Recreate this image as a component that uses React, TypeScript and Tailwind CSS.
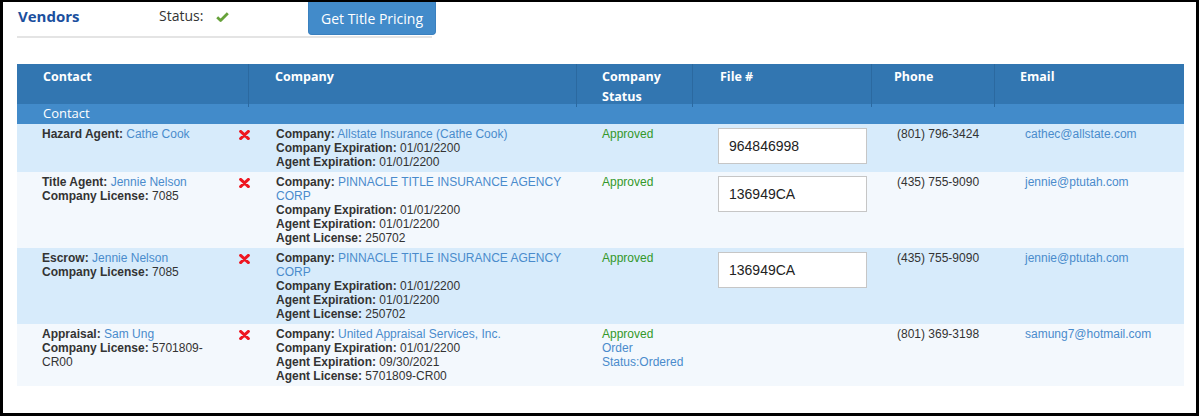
import React from 'react';

type Vendor = {
  role: string;
  name: string;
  license?: string;
  company: string;
  companyExp: string;
  agentExp: string;
  agentLicense?: string;
  status: string;
  orderStatus?: string;
  fileNo?: string;
  phone: string;
  email: string;
};

const vendors: Vendor[] = [
  {
    role: 'Hazard Agent',
    name: 'Cathe Cook',
    company: 'Allstate Insurance (Cathe Cook)',
    companyExp: '01/01/2200',
    agentExp: '01/01/2200',
    status: 'Approved',
    fileNo: '964846998',
    phone: '(801) 796-3424',
    email: 'cathec@allstate.com',
  },
  {
    role: 'Title Agent',
    name: 'Jennie Nelson',
    license: '7085',
    company: 'PINNACLE TITLE INSURANCE AGENCY CORP',
    companyExp: '01/01/2200',
    agentExp: '01/01/2200',
    agentLicense: '250702',
    status: 'Approved',
    fileNo: '136949CA',
    phone: '(435) 755-9090',
    email: 'jennie@ptutah.com',
  },
  {
    role: 'Escrow',
    name: 'Jennie Nelson',
    license: '7085',
    company: 'PINNACLE TITLE INSURANCE AGENCY CORP',
    companyExp: '01/01/2200',
    agentExp: '01/01/2200',
    agentLicense: '250702',
    status: 'Approved',
    fileNo: '136949CA',
    phone: '(435) 755-9090',
    email: 'jennie@ptutah.com',
  },
  {
    role: 'Appraisal',
    name: 'Sam Ung',
    license: '5701809-CR00',
    company: 'United Appraisal Services, Inc.',
    companyExp: '01/01/2200',
    agentExp: '09/30/2021',
    agentLicense: '5701809-CR00',
    status: 'Approved',
    orderStatus: 'Status:Ordered',
    phone: '(801) 369-3198',
    email: 'samung7@hotmail.com',
  },
];

const cols = 'grid grid-cols-[232px_328px_116px_179px_123px_189px]';

function CheckIcon() {
  return (
    <svg width="13" height="10" viewBox="0 0 13 10">
      <path d="M1.2 5.2 L4.6 8.4 L11.8 1.2" fill="none" stroke="#67a23a" strokeWidth="2.8" strokeLinejoin="round" />
    </svg>
  );
}

function RemoveIcon() {
  return (
    <svg width="11" height="10" viewBox="0 0 11 10" className="shrink-0">
      <path d="M1.6 1.4 L9.4 8.6 M9.4 1.4 L1.6 8.6" stroke="#ee1620" strokeWidth="3" strokeLinecap="round" />
    </svg>
  );
}

function Label({ children }: { children: React.ReactNode }) {
  return <span className="font-bold">{children}</span>;
}

export default function App() {
  return (
    <div className="w-[1199px] h-[416px] border-black border-t-2 border-x-[3px] border-b-[3px] bg-white overflow-hidden">
      {/* title bar */}
      <div className="ml-[14px] w-[415px] h-[36px] border-b-2 border-[#e4e4e4] flex items-start font-['Open_Sans',sans-serif]">
        <div className="shrink-0 w-[141px] pt-[4px] text-[15px] leading-[20px] font-bold text-[#1b4f9e] pl-px">Vendors</div>
        <div className="shrink-0 w-[150px] pt-[4px] pl-px flex items-center text-[14px] leading-[20px] text-[#333]">
          <span>Status:</span>
          <span className="ml-[13px] mt-[1px]">
            <CheckIcon />
          </span>
        </div>
        <button className="shrink-0 w-[128px] h-[33px] bg-[#428bca] border border-[#3a80bf] border-t-0 rounded-b-[4px] text-white text-[14px] leading-[20px] pt-px">
          Get Title Pricing
        </button>
      </div>

      {/* table */}
      <div className="ml-[14px] mt-[26px] w-[1167px]">
        <div className={`${cols} h-[40px] bg-[#3276b1] text-white font-bold text-[12.5px] leading-[20px] font-['Open_Sans',sans-serif]`}>
          <div className="pl-[26px] pt-[3px] border-r border-[#2b69a0]">Contact</div>
          <div className="pl-[26px] pt-[3px] border-r border-[#2b69a0]">Company</div>
          <div className="pl-[25px] pt-[3px] border-r border-[#2b69a0] pr-2">Company Status</div>
          <div className="pl-[27px] pt-[3px] border-r border-[#2b69a0]">File #</div>
          <div className="pl-[22px] pt-[3px] border-r border-[#2b69a0]">Phone</div>
          <div className="pl-[25px] pt-[3px]">Email</div>
        </div>
        <div className="h-[20px] bg-[#428bca] text-white text-[13px] leading-[18px] pl-[26px] font-['Open_Sans',sans-serif]">
          Contact
        </div>

        {vendors.map((v, i) => (
          <div
            key={i}
            className={`${cols} py-[3px] text-[12px] leading-[14px] text-[#333] font-['Liberation_Sans',Arial,sans-serif] ${
              i % 2 === 0 ? 'bg-[#d7ebfb]' : 'bg-[#f3f8fd]'
            }`}
          >
            <div className="pl-[25px] flex items-start">
              <div className="w-[172px] shrink-0">
                <div>
                  <Label>{v.role}:</Label> <span className="text-[#4a8bcc]">{v.name}</span>
                </div>
                {v.license && (
                  <div>
                    <Label>Company License:</Label> {v.license}
                  </div>
                )}
              </div>
              <div className="ml-[25px] mt-[3px]">
                <RemoveIcon />
              </div>
            </div>
            <div className="pl-[27px] pr-2">
              <div>
                <Label>Company:</Label> <span className="text-[#4a8bcc]">{v.company}</span>
              </div>
              <div>
                <Label>Company Expiration:</Label> {v.companyExp}
              </div>
              <div>
                <Label>Agent Expiration:</Label> {v.agentExp}
              </div>
              {v.agentLicense && (
                <div>
                  <Label>Agent License:</Label> {v.agentLicense}
                </div>
              )}
            </div>
            <div className="pl-[25px] pr-1">
              <div className="text-[#33982a]">{v.status}</div>
              {v.orderStatus && <div className="text-[#4a8bcc]">Order {v.orderStatus}</div>}
            </div>
            <div className="pl-[25px]">
              {v.fileNo && (
                <input
                  readOnly
                  value={v.fileNo}
                  className="mt-px w-[149px] h-[36px] border border-[#c6c6c6] bg-white px-[10px] text-[14px] text-[#222] font-['Liberation_Sans',Arial,sans-serif] outline-none"
                />
              )}
            </div>
            <div className="pl-[25px]">{v.phone}</div>
            <div className="pl-[30px] text-[#4a8bcc]">{v.email}</div>
          </div>
        ))}
      </div>
    </div>
  );
}
